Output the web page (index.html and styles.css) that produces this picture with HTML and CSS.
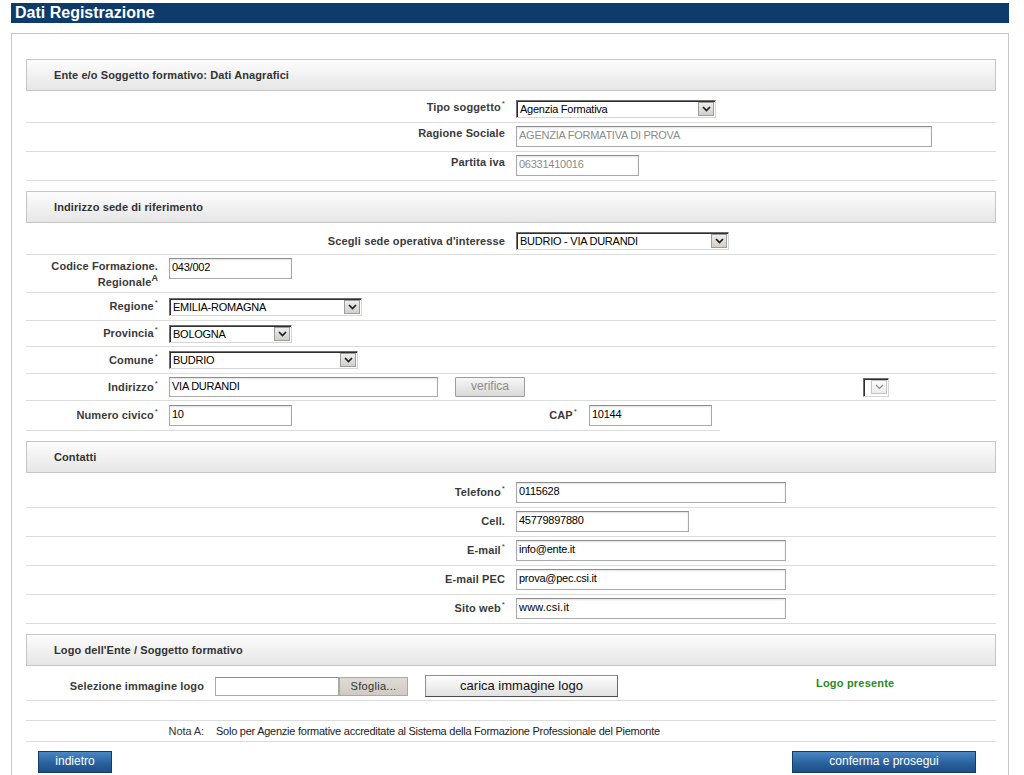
FILE: index.html
```html
<!DOCTYPE html>
<html lang="it">
<head>
<meta charset="utf-8">
<title>Dati Registrazione</title>
<link rel="stylesheet" href="styles.css">
</head>
<body>
<div class="page">
  <h1 class="title">Dati Registrazione</h1>
  <div class="card">

    <section class="sec">
      <div class="sec-head">Ente e/o Soggetto formativo: Dati Anagrafici</div>
      <div class="row half top">
        <label class="lbl">Tipo soggetto<sup class="req">*</sup></label>
        <div class="val">
          <div class="sel w200"><select><option>Agenzia Formativa</option></select><span class="arrow"><svg viewBox="0 0 9 6" width="9" height="6"><path d="M1 1l3.5 3.5L8 1"/></svg></span></div>
        </div>
      </div>
      <div class="row half top">
        <label class="lbl">Ragione Sociale</label>
        <div class="val"><input class="inp ro w416" type="text" value="AGENZIA FORMATIVA DI PROVA"></div>
      </div>
      <div class="row half top">
        <label class="lbl">Partita iva</label>
        <div class="val"><input class="inp ro w123" type="text" value="06331410016"></div>
      </div>
    </section>

    <section class="sec">
      <div class="sec-head">Indirizzo sede di riferimento</div>
      <div class="row half">
        <label class="lbl">Scegli sede operativa d'interesse</label>
        <div class="val">
          <div class="sel w213"><select><option>BUDRIO - VIA DURANDI</option></select><span class="arrow"><svg viewBox="0 0 9 6" width="9" height="6"><path d="M1 1l3.5 3.5L8 1"/></svg></span></div>
        </div>
      </div>
      <div class="row sub top codice">
        <label class="lbl lbl-sub lbl-2">Codice Formazione.<br>Regionale<sup class="note">A</sup></label>
        <div class="val vsub"><input class="inp w123" type="text" value="043/002"></div>
      </div>
      <div class="row sub r-reg">
        <label class="lbl lbl-sub">Regione<sup class="req">*</sup></label>
        <div class="val vsub">
          <div class="sel w193"><select><option>EMILIA-ROMAGNA</option></select><span class="arrow"><svg viewBox="0 0 9 6" width="9" height="6"><path d="M1 1l3.5 3.5L8 1"/></svg></span></div>
        </div>
      </div>
      <div class="row sub r-prov">
        <label class="lbl lbl-sub">Provincia<sup class="req">*</sup></label>
        <div class="val vsub">
          <div class="sel w123"><select><option>BOLOGNA</option></select><span class="arrow"><svg viewBox="0 0 9 6" width="9" height="6"><path d="M1 1l3.5 3.5L8 1"/></svg></span></div>
        </div>
      </div>
      <div class="row sub r-com">
        <label class="lbl lbl-sub">Comune<sup class="req">*</sup></label>
        <div class="val vsub">
          <div class="sel w189"><select><option>BUDRIO</option></select><span class="arrow"><svg viewBox="0 0 9 6" width="9" height="6"><path d="M1 1l3.5 3.5L8 1"/></svg></span></div>
        </div>
      </div>
      <div class="row sub addr-row">
        <label class="lbl lbl-sub">Indirizzo<sup class="req">*</sup></label>
        <div class="val vsub addr">
          <input class="inp w269 h20" type="text" value="VIA DURANDI">
          <button class="btn-gray" type="button">verifica</button>
          <div class="sel sel-mini"><select></select><span class="arrow dim"><svg viewBox="0 0 9 6" width="9" height="6"><path d="M1 1l3.5 3.5L8 1"/></svg></span></div>
        </div>
      </div>
      <div class="row civ">
        <label class="lbl lbl-sub">Numero civico<sup class="req">*</sup></label>
        <div class="val vsub"><input class="inp w123" type="text" value="10"></div>
        <label class="lbl">CAP<sup class="req">*</sup></label>
        <div class="val vcap"><input class="inp w123" type="text" value="10144"></div>
      </div>
    </section>

    <section class="sec">
      <div class="sec-head">Contatti</div>
      <div class="row half">
        <label class="lbl">Telefono<sup class="req">*</sup></label>
        <div class="val"><input class="inp w270" type="text" value="0115628"></div>
      </div>
      <div class="row half">
        <label class="lbl">Cell.</label>
        <div class="val"><input class="inp w173" type="text" value="45779897880"></div>
      </div>
      <div class="row half">
        <label class="lbl">E-mail<sup class="req">*</sup></label>
        <div class="val"><input class="inp w270" type="text" value="info@ente.it"></div>
      </div>
      <div class="row half">
        <label class="lbl">E-mail PEC</label>
        <div class="val"><input class="inp w270" type="text" value="prova@pec.csi.it"></div>
      </div>
      <div class="row half">
        <label class="lbl">Sito web<sup class="req">*</sup></label>
        <div class="val"><input class="inp w270 web" type="text" value="www.csi.it"></div>
      </div>
    </section>

    <section class="sec last">
      <div class="sec-head">Logo dell'Ente / Soggetto formativo</div>
      <div class="row logo-row">
        <label class="lbl">Selezione immagine logo</label>
        <div class="val logo-val">
          <span class="file"><span class="file-box"></span><button class="btn-file" type="button">Sfoglia...</button></span>
          <button class="btn-load" type="button">carica immagine logo</button>
          <span class="logo-ok">Logo presente</span>
        </div>
      </div>
      <div class="row empty"></div>
      <div class="row nota">
        <span class="nota-lbl">Nota A:</span>
        <span class="nota-txt">Solo per Agenzie formative accreditate al Sistema della Formazione Professionale del Piemonte</span>
      </div>
    </section>

    <div class="actions">
      <button class="btn-blue b-back" type="button">indietro</button>
      <button class="btn-blue b-next" type="button">conferma e prosegui</button>
    </div>
  </div>
</div>
</body>
</html>
```

FILE: styles.css
```css
* { box-sizing: border-box; }
html, body { margin: 0; padding: 0; background: #fff; }
body {
  font-family: "Liberation Sans", Arial, sans-serif;
  font-size: 11px;
  color: #333;
}
.page { width: 998px; margin-left: 11px; padding-top: 3px; }
.title {
  margin: 0 0 10px;
  height: 20px;
  line-height: 20px;
  padding-left: 4px;
  background: #0d3b6b;
  color: #fff;
  font-size: 16px;
  font-weight: bold;
}
.card {
  border: 1px solid #c8c8c8;
  border-bottom: 0;
  padding: 25px 12px 20px 14px;
}
.sec { margin-bottom: 10px; }
.sec.last { margin-bottom: 0; }
.sec-head {
  height: 32px;
  line-height: 31px;
  border: 1px solid #c6c6c6;
  background: linear-gradient(#fcfcfc, #e6e6e6);
  padding-left: 27px;
  font-weight: bold;
  color: #333;
  margin-bottom: 6px;
  letter-spacing: .1px;
}
.row {
  display: grid;
  align-items: center;
  border-bottom: 1px solid #dcdcdc;
  padding: 3px 0 4px;
}
.row.top { align-items: start; }
.half { grid-template-columns: 1fr 1fr; }
.sub { grid-template-columns: 140px 1fr; }
.codice { height: 38px; padding: 3px 0 0; }
.r-reg { height: 28px; padding: 0; }
.r-prov { height: 26px; padding: 0; }
.r-com { height: 27px; padding: 0; }
.addr-row { height: 27px; padding: 0; }
.civ { grid-template-columns: 140px 317px 100px 137px; width: 694px; height: 30px; padding: 0; }
.lbl {
  text-align: right;
  padding-right: 6px;
  font-weight: bold;
  color: #3a3a3a;
  line-height: 13px;
  white-space: nowrap;
  letter-spacing: .12px;
}
.top .lbl { padding-top: 1px; }
.top .lbl-2 { padding-top: 0; line-height: 16px; }
.lbl-sub { padding-right: 8px; }
.val { padding-left: 5px; display: flex; align-items: center; }
.vsub { padding-left: 3px; }
.vcap { padding-left: 6px; }
.req {
  font-size: 8px;
  font-weight: normal;
  vertical-align: baseline;
  line-height: 0;
  margin-left: 1px;
  position: relative;
  top: -5px;
}
.note {
  font-size: 9px;
  font-weight: bold;
  vertical-align: baseline;
  line-height: 0;
  position: relative;
  top: -5px;
}

/* text inputs */
.inp {
  height: 21px;
  margin: 0;
  border: 1px solid #a9a9a9;
  border-top-color: #8d8d8d;
  box-shadow: inset 0 1px 2px rgba(0, 0, 0, .12);
  background: #fff;
  font: 11px "Liberation Sans", Arial, sans-serif;
  letter-spacing: -.25px;
  color: #000;
  padding: 0 2px 3px;
  outline: none;
}
.inp.h20 { height: 20px; }
.inp.ro { color: #8a8a8a; }
.inp.web { letter-spacing: .2px; }
.w123 { width: 123px; }
.w173 { width: 173px; }
.w189 { width: 189px; }
.w193 { width: 193px; }
.w200 { width: 200px; }
.w213 { width: 213px; }
.w269 { width: 269px; }
.w270 { width: 270px; }
.w416 { width: 416px; }

/* selects */
.sel {
  display: inline-flex;
  align-items: center;
  height: 18px;
  border: 1px solid;
  border-color: #6e6e6e #d6d6d6 #d6d6d6 #6e6e6e;
  box-shadow: inset 1px 1px 0 #2f2f2f;
  background: #fff;
  padding: 1px 1px 1px 2px;
}
.sel select {
  -webkit-appearance: none;
  appearance: none;
  flex: 1;
  min-width: 0;
  height: 14px;
  margin: 0;
  padding: 0 0 0 1px;
  border: 0;
  background: transparent;
  font: 11px "Liberation Sans", Arial, sans-serif;
  letter-spacing: -.25px;
  color: #000;
  outline: none;
}
.sel .arrow {
  flex: none;
  width: 16px;
  height: 14px;
  border: 1px solid #9d9d9d;
  background: linear-gradient(#efedea, #d2cfca);
  display: flex;
  align-items: center;
  justify-content: center;
}
.arrow svg path { fill: none; stroke: #1f1f1f; stroke-width: 1.7; }
.arrow.dim { background: linear-gradient(#fafafa, #ececec); border-color: #c4c4c4; }
.arrow.dim svg path { stroke: #8a8a8a; stroke-width: 1.2; }
.sel-mini { width: 26px; height: 19px; margin-left: 338px; }

/* address row */
.btn-gray {
  margin: 0 0 0 17px;
  width: 70px;
  height: 20px;
  border: 1px solid #9c9c9c;
  border-radius: 1px;
  background: linear-gradient(#f7f7f7, #d9d9d9);
  font: 12px "Liberation Sans", Arial, sans-serif;
  color: #8c8c8c;
  padding: 0 0 2px;
}

/* logo */
.logo-row { grid-template-columns: 184px 1fr; padding: 3px 0 3px; }
.logo-val { padding-left: 5px; }
.file { display: inline-flex; align-items: stretch; height: 19px; }
.file-box {
  width: 124px;
  border: 1px solid #a9a9a9;
  border-top-color: #8d8d8d;
  background: #fff;
}
.btn-file {
  width: 69px;
  margin: 0;
  border: 1px solid #a8a8a8;
  background: linear-gradient(#dedbd5, #cfcbc4);
  font: 11px "Liberation Sans", Arial, sans-serif;
  color: #333;
  padding: 0;
  letter-spacing: .3px;
}
.btn-load {
  margin: 0 0 0 17px;
  width: 193px;
  height: 22px;
  border: 1px solid #8f8f8f;
  border-bottom-color: #4a4a4a;
  border-right-color: #6a6a6a;
  background: linear-gradient(#fdfdfd, #e1e1e1);
  font: 13px "Liberation Sans", Arial, sans-serif;
  color: #111;
  padding: 0 0 1px;
}
.logo-ok {
  margin-left: 198px;
  font-weight: bold;
  color: #2a8a1e;
  padding-bottom: 6px;
  letter-spacing: .2px;
}
.empty { height: 20px; padding: 0; }
.nota {
  grid-template-columns: 184px 1fr;
  height: 21px;
  padding: 0;
  align-items: center;
}
.nota-lbl { text-align: right; padding-right: 6px; color: #333; letter-spacing: -.1px; }
.nota-txt { padding-left: 6px; color: #222; letter-spacing: -.25px; }

/* footer buttons */
.actions {
  display: flex;
  justify-content: space-between;
  padding: 9px 20px 0 12px;
}
.btn-blue {
  height: 22px;
  margin: 0;
  padding: 0 0 2px;
  border: 1px solid #153b66;
  background: linear-gradient(#4a87c6, #2a629d 55%, #1c4f87);
  color: #fff;
  font: 12px "Liberation Sans", Arial, sans-serif;
}
.b-back { width: 74px; }
.b-next { width: 184px; }
```
